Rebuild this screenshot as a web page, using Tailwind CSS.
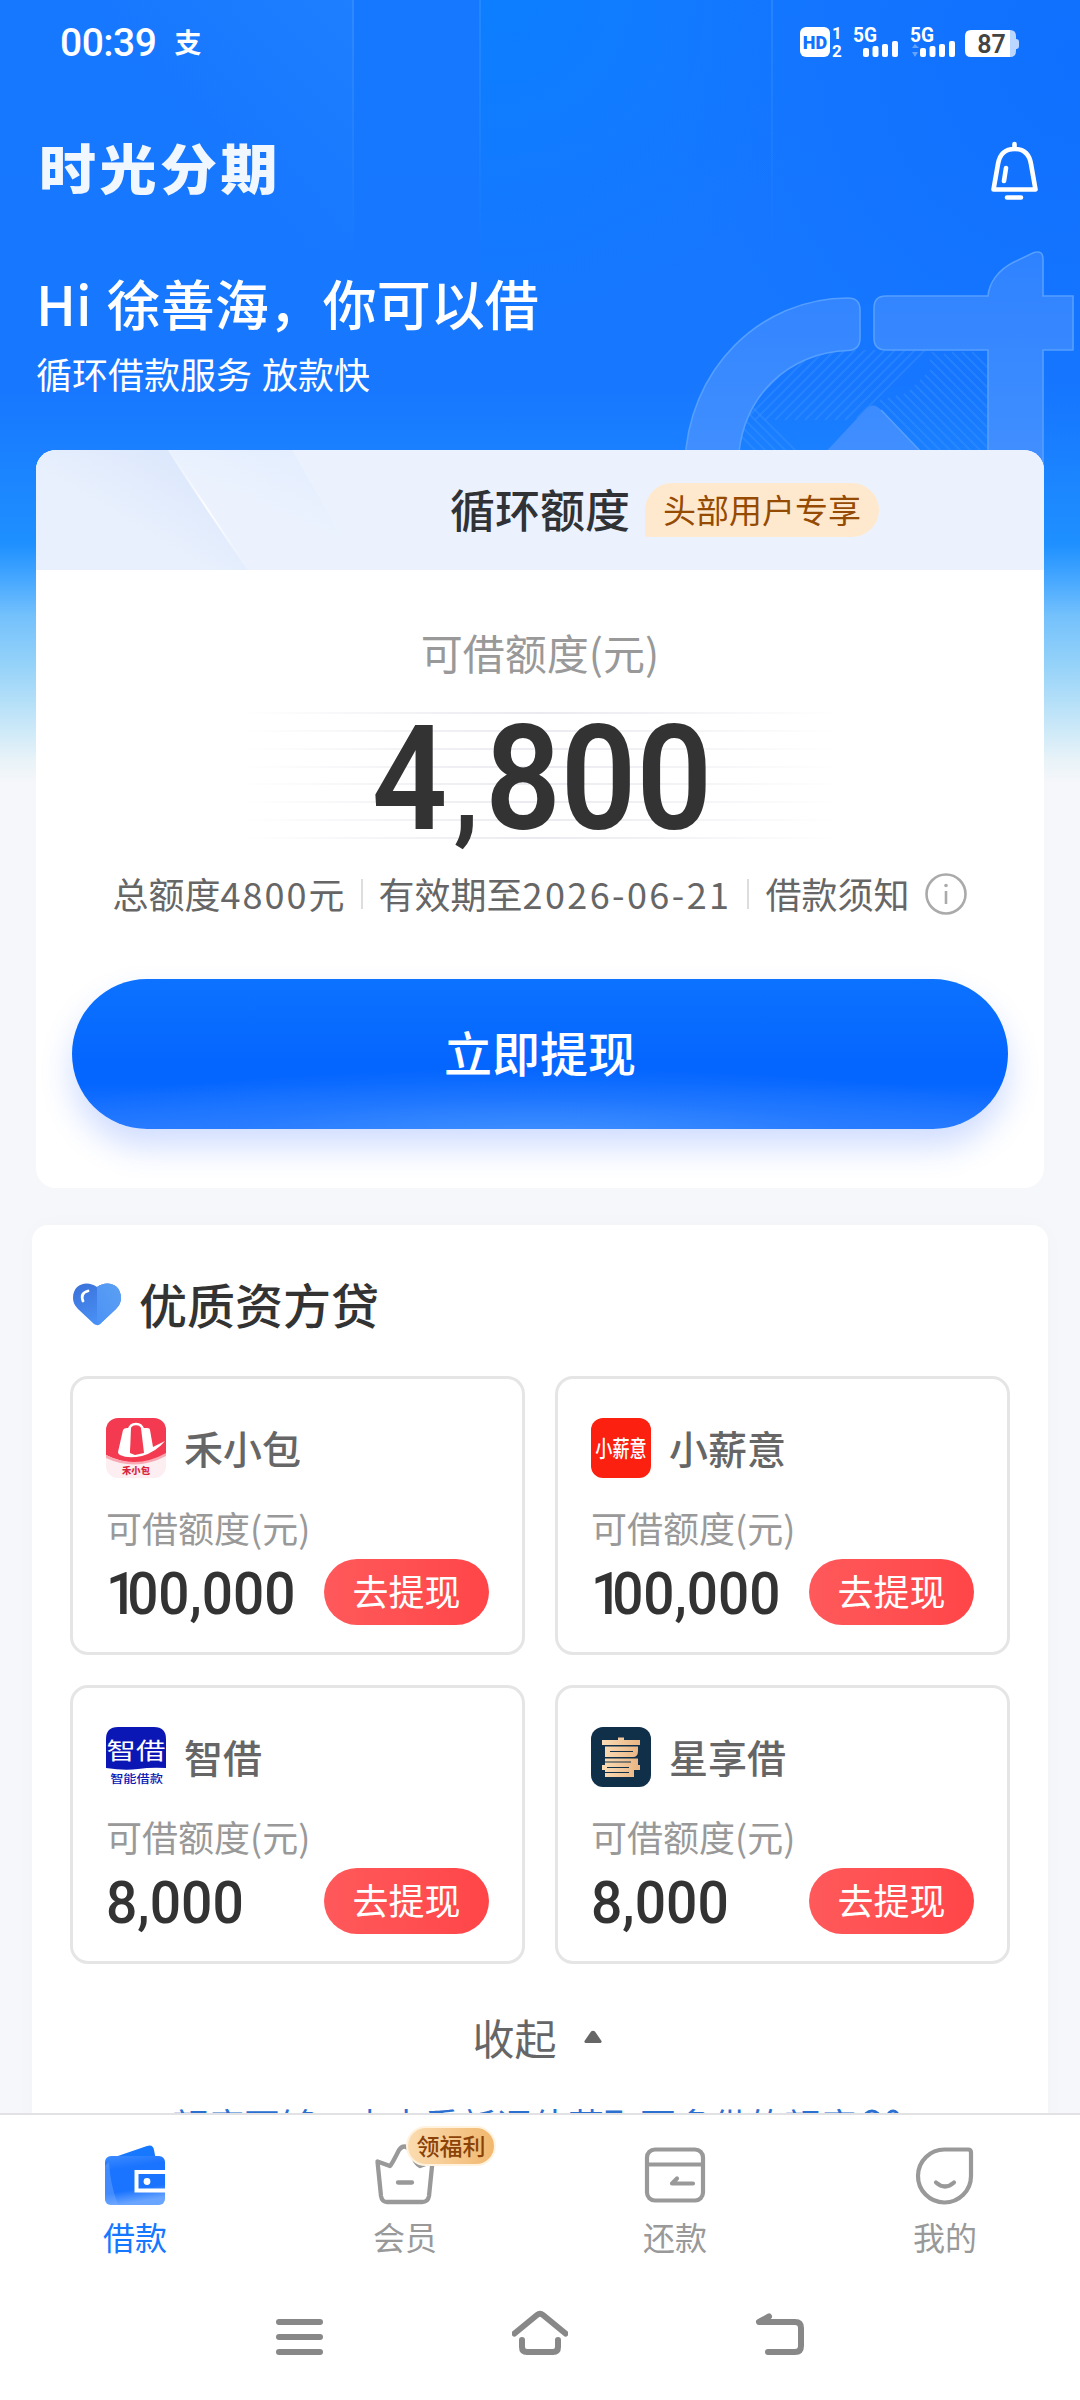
<!DOCTYPE html>
<html lang="zh-CN">
<head>
<meta charset="utf-8">
<title>时光分期</title>
<script src="https://cdn.jsdelivr.net/npm/@tailwindcss/browser@4"></script>
</head>
<body class="bg-[#f6f7fa] font-['Noto_Sans_CJK_SC',sans-serif] leading-none">
<div class="relative flex h-[2400px] w-[1080px] flex-col overflow-hidden">

  <!-- hero background -->
  <svg class="absolute left-0 top-0" width="1080" height="800" viewBox="0 0 1080 800">
    <defs>
      <linearGradient id="sky" x1="0" y1="0" x2="0" y2="800" gradientUnits="userSpaceOnUse">
        <stop offset="0" stop-color="#1677ff"/><stop offset=".48" stop-color="#1777ff"/><stop offset=".56" stop-color="#1a80ff"/>
        <stop offset=".68" stop-color="#1e90ff"/><stop offset=".725" stop-color="#47a8ff"/><stop offset=".77" stop-color="#74c1fc"/>
        <stop offset=".83" stop-color="#94d2f9"/><stop offset=".89" stop-color="#bde3f8"/><stop offset=".95" stop-color="#e8f3f8"/><stop offset=".98" stop-color="#f6f7fa"/>
      </linearGradient>
      <radialGradient id="glow" cx="500" cy="0" r="330" gradientUnits="userSpaceOnUse"><stop offset="0" stop-color="#0a80ff" stop-opacity=".8"/><stop offset="1" stop-color="#0a80ff" stop-opacity="0"/></radialGradient>
      <radialGradient id="dusk" cx="1080" cy="60" r="420" gradientUnits="userSpaceOnUse"><stop offset="0" stop-color="#0c6dff" stop-opacity=".7"/><stop offset="1" stop-color="#0c6dff" stop-opacity="0"/></radialGradient>
      <linearGradient id="ray" x1="0" y1="0" x2="0" y2="250" gradientUnits="userSpaceOnUse"><stop offset="0" stop-color="#59a8ff" stop-opacity=".28"/><stop offset="1" stop-color="#59a8ff" stop-opacity="0"/></linearGradient>
      <linearGradient id="pane" x1="354" y1="0" x2="200" y2="150" gradientUnits="userSpaceOnUse"><stop offset="0" stop-color="#2384ff" stop-opacity=".6"/><stop offset="1" stop-color="#2384ff" stop-opacity="0"/></linearGradient>
      <clipPath id="inner"><path d="M738 452C742 395 790 352 848 350H988V452Z"/></clipPath>
      <linearGradient id="bars" x1="0" y1="250" x2="0" y2="460" gradientUnits="userSpaceOnUse"><stop offset="0" stop-color="#2f82ff"/><stop offset="1" stop-color="#418fff"/></linearGradient>
    </defs>
    <rect width="1080" height="800" fill="url(#sky)"/>
    <rect x="480" width="600" height="400" fill="url(#glow)"/>
    <rect width="1080" height="500" fill="url(#dusk)"/>
    <rect x="100" width="254" height="250" fill="url(#pane)"/>
    <rect x="352" width="2" height="250" fill="url(#ray)"/><rect x="479" width="2" height="250" fill="url(#ray)"/><rect x="771" width="2" height="250" fill="url(#ray)"/>
    <g clip-path="url(#inner)" stroke="#3f93ff" stroke-width="2" stroke-opacity=".4">
      <path d="M740 405L800 345M740 415L810 345M740 425L820 345M755 420L830 345M765 420L840 345M775 420L850 345M785 420L860 345M795 420L870 345M805 420L880 345M815 420L890 345M825 420L900 345M835 420L910 345M845 420L920 345M857 418L930 345"/>
      <path d="M880 400L935 455M888 398L945 455M896 396L955 455M904 394L965 455M910 390L975 455M915 385L985 455M920 380L995 455M925 375L1005 455M930 370L1015 455M930 360L1025 455M932 352L1035 455M944 354L1035 445M952 352L1035 435M962 352L1035 425M972 352L1035 415"/>
      <path d="M735 430L760 455M738 423L770 455M742 417L780 455M747 412L790 455M752 407L800 455"/>
    </g>
    <g fill="url(#bars)" stroke="#559fff" stroke-width="1.6">
      <path d="M685 465C687 370 760 298 848 298Q860 298 860 310V338Q860 350 848 350.500C790 352 740 395 738 465Z"/>
      <path d="M886 296H988C989 283 998 270 1014 262L1034 252.500Q1043 250 1043 259V296H1073V350H1043V480H988V350H886Q874 350 874 338V308Q874 296 886 296Z"/>
      <path d="M822 456L865 410Q873 401 881 410L925 456Z" stroke="none"/>
      <path d="M881 410L925 456" fill="none"/>
    </g>
  </svg>

  <main class="relative flex h-[2113px] shrink-0 flex-col overflow-hidden">
    <!-- status bar -->
    <div class="flex h-[84px] shrink-0 items-center justify-between pl-[60px] pr-[60px] text-white">
      <div class="flex items-center gap-[18px]">
        <span class="pt-[2px] font-['Roboto'] text-[39px] font-medium tracking-[-0.5px]">00:39</span>
        <span class="pb-[2px] text-[27px] font-bold">支</span>
      </div>
      <svg class="overflow-visible" width="222" height="34" viewBox="799 25 222 34" fill="#fff">
        <rect x="801" y="27" width="30" height="30" rx="6"/>
        <text x="816" y="48.500" text-anchor="middle" font-family="Roboto" font-weight="900" font-size="18" fill="#1272ff">HD</text>
        <text x="838" y="39" text-anchor="middle" font-family="Roboto" font-weight="700" font-size="17">1</text>
        <text x="838" y="57" text-anchor="middle" font-family="Roboto" font-weight="700" font-size="17">2</text>
        <text x="854" y="42" font-family="Roboto" font-weight="700" font-size="21" textLength="24" lengthAdjust="spacingAndGlyphs">5G</text>
        <rect x="864" y="48" width="6" height="9" rx="2"/><rect x="873.500" y="46" width="6" height="11" rx="2"/><rect x="883" y="44" width="6" height="13" rx="2"/><rect x="893" y="41" width="6" height="16" rx="2"/>
        <text x="911" y="42" font-family="Roboto" font-weight="700" font-size="21" textLength="24" lengthAdjust="spacingAndGlyphs">5G</text>
        <path d="M916 44l4 4h-7zM916 57l-3-5h6z" opacity=".35"/>
        <rect x="921" y="48" width="6" height="9" rx="2"/><rect x="930.500" y="46" width="6" height="11" rx="2"/><rect x="940" y="44" width="6" height="13" rx="2"/><rect x="950" y="41" width="6" height="16" rx="2"/>
        <path d="M1008 30h3q6 0 6 6v3q3 0 3 3v4q0 3-3 3v2q0 6-6 6h-3z" fill="#bcd7ff"/>
        <path d="M972 30H1011V57H972Q966 57 966 51V36Q966 30 972 30Z"/>
        <text x="992.500" y="52.500" text-anchor="middle" font-family="Roboto" font-weight="600" font-size="25" fill="#444">87</text>
      </svg>
    </div>

    <!-- app header -->
    <header class="flex h-[174px] shrink-0 items-center justify-between pl-[39px] pr-[40px]">
      <h1 class="origin-center scale-y-[.95] pb-[9px] text-[57px] font-black tracking-[3.5px] text-[#f1f7ff]">时光分期</h1>
      <svg class="mt-[1px]" width="50" height="62" viewBox="990 141 50 62" fill="none" stroke="#fff" stroke-width="4.600" stroke-linecap="round" stroke-linejoin="round">
        <path d="M1014.500 144V149M993.500 189.500L998 164C1000 152 1007 149 1014.500 149S1029 152 1031 164L1035.500 189.500ZM1006 168L1004 181M1007 197.500H1021"/>
      </svg>
    </header>

    <section class="flex h-[192px] shrink-0 flex-col pl-[36px] pt-[18px] text-white">
      <h2 class="text-[54px] font-medium"><span class="mr-[3px]">Hi</span> 徐善海，你可以借</h2>
      <p class="mt-[25px] text-[36px] [word-spacing:2px]">循环借款服务 放款快</p>
    </section>

    <!-- quota card -->
    <section class="mx-[36px] flex h-[738px] shrink-0 flex-col items-center overflow-hidden rounded-[20px] bg-white">
      <div class="relative flex h-[120px] w-full shrink-0 items-center bg-[#ebf2fe] pl-[414px]">
        <svg class="absolute left-0 top-0" width="420" height="120" viewBox="0 0 420 120">
          <defs>
            <linearGradient id="f1" x1="140" y1="0" x2="95" y2="75" gradientUnits="userSpaceOnUse"><stop offset="0" stop-color="#dbe7fc"/><stop offset="1" stop-color="#e8f0fd"/></linearGradient>
            <linearGradient id="f2" x1="250" y1="0" x2="225" y2="55" gradientUnits="userSpaceOnUse"><stop offset="0" stop-color="#e4eefe"/><stop offset="1" stop-color="#ebf2fe"/></linearGradient>
            <linearGradient id="f3" x1="0" y1="0" x2="0" y2="120" gradientUnits="userSpaceOnUse"><stop offset="0" stop-color="#fff" stop-opacity=".1"/><stop offset=".5" stop-color="#fff" stop-opacity=".9"/><stop offset="1" stop-color="#fff" stop-opacity="0"/></linearGradient>
          </defs>
          <path d="M132 0H256L325 120H212Z" fill="url(#f2)"/>
          <path d="M0 0H132L212 120H0Z" fill="url(#f1)"/>
          <path d="M132 0L212 120" stroke="url(#f3)" stroke-width="2"/>
        </svg>
        <span class="relative pb-[4px] text-[45px] font-medium text-[#303236]">循环额度</span>
        <span class="relative ml-[15px] flex h-[54px] w-[234px] items-center justify-center rounded-[27px] rounded-bl-[3px] bg-[#ffe9ce] pb-[2px] text-[33px] text-[#954b03]">头部用户专享</span>
      </div>
      <p class="mt-[61px] text-[42px] text-[#999]">可借额度(元)</p>
      <div class="relative mt-[39px] flex h-[128px] w-[600px] items-center justify-center">
        <svg class="absolute left-0 top-0" width="600" height="128">
          <defs><linearGradient id="fade"><stop offset="0" stop-color="#e9e9ef" stop-opacity="0"/><stop offset=".5" stop-color="#eaeaf0"/><stop offset="1" stop-color="#e9e9ef" stop-opacity="0"/></linearGradient></defs>
          <g fill="url(#fade)"><rect y="0" width="600" height="2"/><rect y="18" width="600" height="2"/><rect y="36" width="600" height="2"/><rect y="54" width="600" height="2"/><rect y="71" width="600" height="2"/><rect y="89" width="600" height="2"/><rect y="107" width="600" height="2"/><rect y="125" width="600" height="2"/></g>
        </svg>
        <span class="relative inline-block origin-center scale-x-90 pl-[4px] pt-[7px] font-['Roboto'] text-[147px] font-semibold text-[#333]">4<span class="mx-[7px] text-[120px]">,</span>800</span>
      </div>
      <div class="mt-[33px] flex h-[42px] shrink-0 items-center text-[36px] text-[#666]">
        <span class="pb-[2px]">总额度<span class="tracking-[2px]">4800</span>元</span>
        <span class="mx-[16px] h-[30px] w-[2px] bg-[#ddd]"></span>
        <span class="pb-[2px]">有效期至<span class="tracking-[2.4px]">2026-06-21</span></span>
        <span class="mx-[16px] h-[30px] w-[2px] bg-[#ddd]"></span>
        <span class="pb-[2px]">借款须知</span>
        <svg class="ml-[16px]" width="42" height="42" fill="none" stroke="#aaa"><circle cx="21" cy="21" r="19.500" stroke-width="2.600"/><path d="M21 18V31" stroke-width="2.600"/><circle cx="21" cy="12.500" r="1.800" fill="#aaa" stroke="none"/></svg>
      </div>
      <button class="relative mt-[64px] flex h-[150px] w-[936px] shrink-0 items-center justify-center overflow-visible rounded-full bg-[radial-gradient(ellipse_60%_45%_at_50%_105%,#4090ff_0%,#2c80ff88_55%,#0566ff00_100%),linear-gradient(180deg,#0c72ff_0%,#0566ff_55%,#0566ff_70%,#2478ff_100%)] pb-[7px] text-[48px] font-medium text-white shadow-[0_18px_32px_rgba(40,100,255,0.22)]">立即提现</button>
    </section>

    <!-- lenders -->
    <section class="mx-[32px] mt-[37px] flex h-[1000px] shrink-0 flex-col rounded-t-[16px] bg-white px-[38px] shadow-[0_0_24px_rgba(0,0,0,0.02)]">
      <div class="flex h-[151px] shrink-0 items-center pb-[1px] pt-[8px]">
        <svg class="ml-[3px]" width="48" height="43" viewBox="0 0 48 43">
          <defs><linearGradient id="h1" x1="0" x2=".6" y2="1"><stop offset="0" stop-color="#3a70d8"/><stop offset="1" stop-color="#4a93f8"/></linearGradient><linearGradient id="h2" x1="1" x2="0" y2="1"><stop offset="0" stop-color="#5ba0f2"/><stop offset="1" stop-color="#4c92f6"/></linearGradient></defs>
          <path d="M24 4C15-3 0 0 0 15Q0 21 5 26L21 41Q24 43 27 41L43 26Q48 21 48 15C48 0 33-3 24 4Z" fill="url(#h1)"/>
          <path d="M24 4C33-3 48 0 48 15Q48 21 43 26L27 41Q25.500 42.500 24 42.300Z" fill="url(#h2)"/>
          <path d="M15 8Q7 10 10 18" fill="none" stroke="#fff" stroke-width="2.800" stroke-linecap="round"/>
        </svg>
        <h3 class="ml-[18px] pb-[3px] text-[48px] font-medium text-[#333]">优质资方贷</h3>
      </div>

      <div class="grid shrink-0 grid-cols-2 gap-[30px]">
        <article class="flex h-[279px] flex-col rounded-[18px] border-[3px] border-[#e5e5e5] px-[33px] pt-[39px]">
          <div class="flex h-[60px] items-center gap-[18px]">
            <svg width="60" height="60" viewBox="0 0 60 60">
              <defs><clipPath id="r1"><rect width="60" height="60" rx="12"/></clipPath></defs>
              <g clip-path="url(#r1)"><rect width="60" height="60" fill="#fdeef1"/><path d="M0 0H60V37Q30 52 0 37Z" fill="#f43a50"/><path d="M0 37Q30 52 60 35V38Q30 54 0 40Z" fill="#f8a9b3"/></g>
              <path d="M17 12Q18 10 21 10H25L24 35 29 37 38 35 35 10H41Q44 10 44 12L47 29Q53 26 59 23Q50 34 36 38Q22 41 14 37Q12 36 12 34Z" fill="#fff"/>
              <path d="M23 12Q24 6 30 6T37 12" fill="none" stroke="#fff" stroke-width="2.500"/><path d="M28 11H33L36 34H24Z" fill="#f43a50"/>
              <text x="30" y="56" text-anchor="middle" font-family="Noto Sans CJK SC" font-weight="900" font-size="9.300" fill="#d9263e">禾小包</text>
            </svg>
            <span class="pb-[2px] text-[39px] font-medium text-[#666]">禾小包</span>
          </div>
          <p class="mt-[31px] text-[36px] text-[#999]">可借额度(元)</p>
          <div class="mt-[14px] flex h-[66px] items-center justify-between">
            <span class="inline-block origin-left scale-x-[.915] pt-[3px] font-['Roboto'] text-[60px] font-medium text-[#333]"><span class="tracking-[-11px]">1</span>00,000</span>
            <button class="-ml-4 h-[66px] w-[165px] shrink-0 rounded-full bg-linear-to-r from-[#ff595b] to-[#ff4548] pb-[4px] text-[36px] text-white">去提现</button>
          </div>
        </article>

        <article class="flex h-[279px] flex-col rounded-[18px] border-[3px] border-[#e5e5e5] px-[33px] pt-[39px]">
          <div class="flex h-[60px] items-center gap-[18px]">
            <svg width="60" height="60" viewBox="0 0 60 60"><rect width="60" height="60" rx="12" fill="#fb200f"/><text transform="translate(30 39) scale(.76 1)" text-anchor="middle" font-family="Noto Sans CJK SC" font-weight="500" font-size="22.500" fill="#fff">小薪意</text></svg>
            <span class="pb-[2px] text-[39px] font-medium text-[#666]">小薪意</span>
          </div>
          <p class="mt-[31px] text-[36px] text-[#999]">可借额度(元)</p>
          <div class="mt-[14px] flex h-[66px] items-center justify-between">
            <span class="inline-block origin-left scale-x-[.915] pt-[3px] font-['Roboto'] text-[60px] font-medium text-[#333]"><span class="tracking-[-11px]">1</span>00,000</span>
            <button class="-ml-4 h-[66px] w-[165px] shrink-0 rounded-full bg-linear-to-r from-[#ff595b] to-[#ff4548] pb-[4px] text-[36px] text-white">去提现</button>
          </div>
        </article>

        <article class="flex h-[279px] flex-col rounded-[18px] border-[3px] border-[#e5e5e5] px-[33px] pt-[39px]">
          <div class="flex h-[60px] items-center gap-[18px]">
            <svg width="60" height="60" viewBox="0 0 60 60">
              <path d="M0 12Q0 0 12 0H48Q60 0 60 12V41Q45 40 32 42T0 41Z" fill="#0a17b4"/>
              <text transform="translate(30 31.500) scale(1.280 1)" text-anchor="middle" font-family="Noto Sans CJK SC" font-weight="400" font-size="23" fill="#fff">智借</text>
              <text transform="translate(30.500 56) scale(1.200 1)" text-anchor="middle" font-family="Noto Sans CJK SC" font-weight="500" font-size="11" fill="#0a17b4">智能借款</text>
            </svg>
            <span class="pb-[2px] text-[39px] font-medium text-[#666]">智借</span>
          </div>
          <p class="mt-[31px] text-[36px] text-[#999]">可借额度(元)</p>
          <div class="mt-[14px] flex h-[66px] items-center justify-between">
            <span class="inline-block origin-left scale-x-[.92] pt-[3px] font-['Roboto'] text-[60px] font-medium text-[#333]">8,000</span>
            <button class="-ml-4 h-[66px] w-[165px] shrink-0 rounded-full bg-linear-to-r from-[#ff595b] to-[#ff4548] pb-[4px] text-[36px] text-white">去提现</button>
          </div>
        </article>

        <article class="flex h-[279px] flex-col rounded-[18px] border-[3px] border-[#e5e5e5] px-[33px] pt-[39px]">
          <div class="flex h-[60px] items-center gap-[18px]">
            <svg width="60" height="60" viewBox="0 0 60 60">
              <defs><linearGradient id="gold"><stop offset="0" stop-color="#fbdcb6"/><stop offset="1" stop-color="#e9b582"/></linearGradient></defs>
              <rect width="60" height="60" rx="12" fill="#10304a"/>
              <path d="M27 10.500H33V13H49V18H11V13H27ZM14 19.500H47V24Q47 30 42 30H14ZM14 31.500H47V38H49V43H43V50H14V43H11V38H14Z" fill="url(#gold)"/>
              <path d="M19 24.500H42M14 35H40M16 40.500H38M14 45.500H38" stroke="#10304a" stroke-width="1.100"/>
            </svg>
            <span class="pb-[2px] text-[39px] font-medium text-[#666]">星享借</span>
          </div>
          <p class="mt-[31px] text-[36px] text-[#999]">可借额度(元)</p>
          <div class="mt-[14px] flex h-[66px] items-center justify-between">
            <span class="inline-block origin-left scale-x-[.92] pt-[3px] font-['Roboto'] text-[60px] font-medium text-[#333]">8,000</span>
            <button class="-ml-4 h-[66px] w-[165px] shrink-0 rounded-full bg-linear-to-r from-[#ff595b] to-[#ff4548] pb-[4px] text-[36px] text-white">去提现</button>
          </div>
        </article>
      </div>

      <div class="mt-[52px] flex h-[42px] shrink-0 items-center justify-center gap-[26px] pr-[5px] text-[42px] text-[#666]">
        <span>收起</span>
        <svg class="mb-[1px]" width="20" height="14"><path d="M8 1.500Q10 0 12 1.500L18.500 11Q19 13 17 13H3Q1 13 1.500 11Z" fill="#666"/></svg>
      </div>
      <p class="ml-[102px] mt-[48px] flex shrink-0 gap-[6px] whitespace-nowrap text-[36px] text-[#2b6fd0]">额度不够，点击重新评估获取更多借的额度
        <svg width="44" height="36" fill="none" stroke="#2b6fd0" stroke-width="3"><circle cx="10" cy="13" r="8"/><circle cx="31" cy="10" r="5"/></svg>
      </p>
    </section>
  </main>

  <!-- tab bar -->
  <nav class="relative grid h-[150px] shrink-0 grid-cols-4 border-t-2 border-[#e2e2e4] bg-white pt-[29px] text-[32px] text-[#999]">
    <a class="flex flex-col items-center gap-[14px] text-[#1677ff]">
      <svg width="62" height="62" viewBox="0 0 62 62">
        <defs><linearGradient id="w" x2=".2" y2="1"><stop offset="0" stop-color="#3d8bff"/><stop offset=".3" stop-color="#1b74ff"/><stop offset=".75" stop-color="#1b74ff"/><stop offset="1" stop-color="#69a4ff"/></linearGradient></defs>
        <path d="M8 14L43 2Q49 0 50 6L52 16H8Z" fill="#1677ff"/>
        <rect x="1" y="12" width="60" height="49" rx="6" fill="url(#w)"/><path d="M1 22V55Q1 61 7 61H14Q6 40 5 18Z" fill="#7ab0ff" opacity=".4"/>
        <path d="M61 28H32.500V46.500H61" fill="none" stroke="#fff" stroke-width="4"/><circle cx="43" cy="37.500" r="3.400" fill="#fff"/>
      </svg>
      借款
    </a>
    <a class="relative flex flex-col items-center gap-[14px]">
      <svg width="62" height="62" viewBox="0 0 62 62" fill="none" stroke="#999" stroke-width="4.300" stroke-linecap="round" stroke-linejoin="round"><path d="M3.500 17.500L16 22Q18 20 25 6Q30-1 36 6Q41 20 46 22L58.500 17.500L55 52Q54 58 48 58H13Q8 58 7 52ZM24 38.500H38"/></svg>
      会员
      <span class="absolute left-[136px] top-[-18px] flex h-[40px] w-[90px] items-center justify-center rounded-full border-2 border-[#fff3e0] bg-linear-to-r from-[#fbdcb0] to-[#f1b76e] pb-[1px] text-[23px] font-medium text-[#8a4208]">领福利</span>
    </a>
    <a class="flex flex-col items-center gap-[14px]">
      <svg width="62" height="62" viewBox="0 0 62 62" fill="none" stroke="#999" stroke-width="4.200" stroke-linecap="round" stroke-linejoin="round"><rect x="3" y="5.500" width="56" height="51" rx="8"/><path d="M3 20.500H59M49 39.500H28L33 34.500"/></svg>
      还款
    </a>
    <a class="flex flex-col items-center gap-[14px]">
      <svg width="62" height="62" viewBox="0 0 62 62" fill="none" stroke="#999" stroke-width="4.200" stroke-linecap="round" stroke-linejoin="round"><path d="M31 5.500H54Q57 5.500 57 8.500V32A26.500 26.500 0 1 1 31 5.500ZM22 38.500Q31 46.500 40 38.500"/></svg>
      我的
    </a>
  </nav>

  <!-- system navigation -->
  <div class="relative flex grow justify-center gap-[184px] bg-white pt-[45px]">
    <svg width="56" height="56" fill="none" stroke="#888" stroke-width="6" stroke-linecap="round"><path d="M7 14H48M7 29H48M7 44H48"/></svg>
    <svg width="56" height="56" fill="none" stroke="#888" stroke-width="6" stroke-linecap="round" stroke-linejoin="round"><path d="M2.500 25.500L25 7Q28 4.500 31 7L53.500 25.500M10 32V39Q10 44 15 44H41Q46 44 46 39V32"/></svg>
    <svg width="56" height="56" fill="none" stroke="#888" stroke-width="6" stroke-linecap="round" stroke-linejoin="round"><path d="M17 8.500L7 14H43Q49 14 49 20V38Q49 44 43 44H16"/></svg>
  </div>
</div>
</body>
</html>
